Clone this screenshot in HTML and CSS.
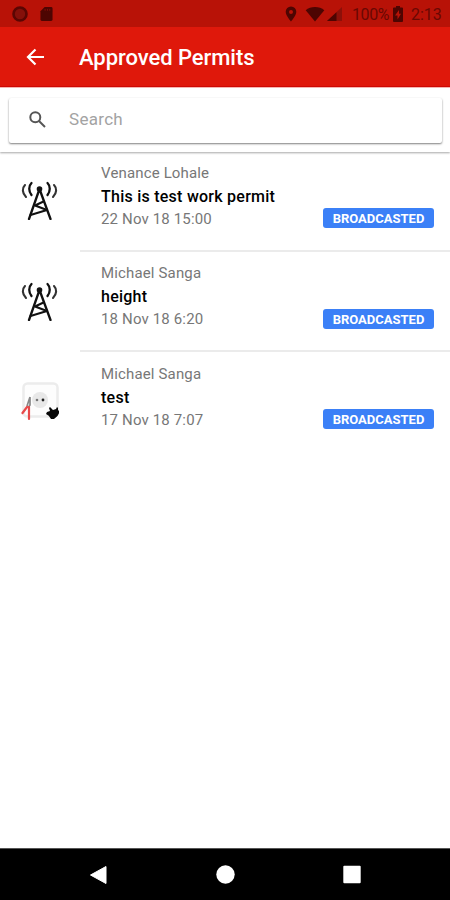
FILE: index.html
```html
<!DOCTYPE html>
<html lang="en">

<head>
    <meta charset="UTF-8">
    <meta name="viewport" content="width=device-width, initial-scale=1.0">
    <title>Approved Permits</title>
    <link rel="stylesheet" href="styles.css">
</head>

<body>
    <svg class="sprite">
        <symbol id="tower" viewBox="0 0 38 40">
            <g fill="none" stroke="#111" stroke-linecap="round">
                <path d="M18.500 9 8 39M18.500 9 29.500 39" stroke-width="2.300" />
                <path d="M14 25.500 22.500 21.500M14 25.500 26 30M9.500 35 26 30" stroke-width="2" />
                <path d="M10.500 3C7.500 6 7.500 11 10.500 15M26.500 3C29.500 6 29.500 11 26.500 15" stroke-width="2.300" />
                <path d="M4 5C1 8 1 13 5 17M33 5C36 8 36 13 32 17" stroke="#333" stroke-width="2.100" />
            </g>
            <circle cx="18.500" cy="9" r="2.800" fill="#111" />
        </symbol>
    </svg>

    <div class="screen">
        <div class="status">
            <svg class="ring" viewBox="0 0 16 16"><circle cx="8" cy="8" r="6.500" fill="#85100a" stroke="#5a0603" stroke-width="2.600" /></svg>
            <svg class="card" viewBox="0 0 14 16"><path d="M5 0.500h7q1.500 0 1.500 1.500v12q0 1.500-1.500 1.500H2Q.5 15.500.5 14V5z" fill="#4d0502" /><path d="M5.500 2.500v2M8 2.500v2M10.500 2.500v2" stroke="#85100a" /></svg>
            <div class="right">
                <svg class="pin" viewBox="0 0 12 16"><path fill-rule="evenodd" d="M6 .5a5.300 5.300 0 0 0-5.300 5.300C.7 9.800 6 15.500 6 15.500s5.300-5.700 5.300-9.700A5.300 5.300 0 0 0 6 .5zm0 3.400a2 2 0 1 1 0 4 2 2 0 0 1 0-4z" /></svg>
                <svg class="wifi" viewBox="0 0 20 16"><path d="M10 15.500.7 4.200C5.500-.2 14.500-.2 19.300 4.200z" /></svg>
                <svg class="signal" viewBox="0 0 15 15"><path d="M15 0v14H0z" fill="#8c1009" /><path d="M9.500 5.200V14H0z" /></svg>
                <span class="percent">100%</span>
                <svg class="power" viewBox="0 0 10 16"><path fill-rule="evenodd" d="M3 0h4v1.500h2q1 0 1 1V15q0 1-1 1H1q-1 0-1-1V2.500q0-1 1-1h2zM6 4 2 9.500h2.500V13.500L8 7.800H6z" /></svg>
                <span class="time">2:13</span>
            </div>
        </div>

        <div class="header">
            <svg class="back" viewBox="0 0 20 18"><path d="M18 9H2.500M9.500 1.500 2 9l7.500 7.500" /></svg>
            <h1>Approved Permits</h1>
        </div>

        <div class="search">
            <div class="searchBox">
                <svg viewBox="0 0 17 17"><circle cx="6.300" cy="6.300" r="5" /><path d="m10 10 6 6" /></svg>
                <span>Search</span>
            </div>
        </div>

        <div class="list">
            <div class="permit">
                <svg class="icon"><use href="#tower" /></svg>
                <div class="info">
                    <div class="name">Venance Lohale</div>
                    <div class="title">This is test work permit</div>
                    <div class="date">22 Nov 18 15:00</div>
                    <span class="badge">BROADCASTED</span>
                </div>
            </div>
            <div class="permit">
                <svg class="icon"><use href="#tower" /></svg>
                <div class="info">
                    <div class="name">Michael Sanga</div>
                    <div class="title">height</div>
                    <div class="date">18 Nov 18 6:20</div>
                    <span class="badge">BROADCASTED</span>
                </div>
            </div>
            <div class="permit">
                <svg class="icon" viewBox="0 0 38 40">
                    <rect x="2.500" y="2.500" width="34" height="33" rx="4" fill="#fdfdfd" stroke="#ececec" stroke-width="2.500" />
                    <circle cx="19" cy="19" r="8" fill="#e8e8e8" />
                    <circle cx="16" cy="19" r="1.300" fill="#777" />
                    <circle cx="22" cy="19" r="1.400" fill="#222" />
                    <path d="M9 16v8l-2 3M9 16 6 25" fill="none" stroke="#888" stroke-width="1.700" />
                    <path d="M6 26 1.500 32M8 26v12" fill="none" stroke="#e8494a" stroke-width="2.200" stroke-linecap="round" />
                    <path d="m26 31 3-1-1-3 1-1 3 3 3-1 1-2 1 1v2l1 1q1 4-5 8l-3 0q-2-4-5-5z" fill="#080808" />
                </svg>
                <div class="info">
                    <div class="name">Michael Sanga</div>
                    <div class="title">test</div>
                    <div class="date">17 Nov 18 7:07</div>
                    <span class="badge">BROADCASTED</span>
                </div>
            </div>
        </div>

        <div class="navbar">
            <svg viewBox="0 0 20 20"><path d="M17 1.500v17L1.500 10z" stroke="#fff" stroke-linejoin="round" /></svg>
            <svg viewBox="0 0 20 20"><circle cx="9.500" cy="9.500" r="9.200" /></svg>
            <svg viewBox="0 0 20 20"><rect x="1.300" y="0.800" width="17.400" height="17.400" rx="1" /></svg>
        </div>
    </div>
</body>

</html>
```
FILE: styles.css
```css
body {
    margin: 0;
    font-family: Roboto, sans-serif;
    background: #fff;
}

.sprite {
    display: none;
}

.screen {
    width: 450px;
    height: 900px;
    display: flex;
    flex-direction: column;
    overflow: hidden;
}

.status {
    height: 27px;
    box-sizing: border-box;
    padding: 1px 9px 0 12px;
    display: flex;
    align-items: center;
    background: #b81207;
    color: #690803;
    fill: #4d0502;
    font-size: 16px;
}

.ring {
    width: 16px;
    height: 16px;
}

.card {
    width: 13px;
    height: 16px;
    margin-left: 12px;
}

.right {
    margin-left: auto;
    display: flex;
    align-items: center;
}

.pin {
    width: 12px;
    height: 16px;
}

.wifi {
    width: 20px;
    height: 16px;
    margin-left: 8px;
}

.signal {
    width: 15px;
    height: 15px;
    margin-left: 2px;
}

.percent {
    margin-left: 10px;
    width: 37px;
    letter-spacing: -0.4px;
}

.power {
    width: 10px;
    height: 16px;
    margin-left: 4px;
}

.time {
    margin-left: 8px;
    width: 30px;
}

.header {
    height: 60px;
    padding-left: 26px;
    display: flex;
    align-items: center;
    background: #df180b;
    box-shadow: inset 0 -1px #d20a05;
}

.back {
    width: 20px;
    height: 18px;
    fill: none;
    stroke: #fff;
    stroke-width: 2.2;
}

.header h1 {
    margin: 0 0 0 33px;
    font-size: 22px;
    font-weight: 500;
    letter-spacing: -0.05px;
    color: #fff;
}

.search {
    height: 65px;
    box-sizing: border-box;
    padding: 10px 8px 9px 9px;
    border-top: 1px solid #f6b5b1;
    box-shadow: 0 1px 2px rgba(0, 0, 0, 0.35);
}

.searchBox {
    height: 45px;
    box-sizing: border-box;
    padding: 0 0 3px 20px;
    display: flex;
    align-items: center;
    border-radius: 2px;
    box-shadow: 0 1px 2px rgba(0, 0, 0, 0.5);
    font-size: 17px;
    letter-spacing: 0.3px;
    color: #a3a3a3;
}

.searchBox svg {
    width: 17px;
    height: 17px;
    margin-right: 23px;
    fill: none;
    stroke: #555;
    stroke-width: 2;
}

.list {
    flex: 1;
    padding-top: 10px;
}

.permit {
    height: 100.7px;
    display: flex;
}

.icon {
    width: 38px;
    height: 40px;
    margin: 18px 20px 0 21px;
}

.info {
    flex: 1;
    padding-left: 22px;
    display: grid;
    grid-template-columns: 1fr auto;
    grid-template-rows: 21px 26px 19px 1fr;
    align-items: center;
    position: relative;
}

.permit:not(:last-child) .info::after {
    content: "";
    position: absolute;
    left: 1px;
    right: 0;
    bottom: 11px;
    height: 2px;
    background: #ebebeb;
}

.name,
.title {
    grid-column: 1 / 3;
}

.name,
.date {
    font-size: 15px;
    letter-spacing: 0.15px;
    color: #777;
}

.title {
    font-size: 16px;
    font-weight: 500;
    letter-spacing: 0.25px;
    color: #000;
}

.badge {
    width: 111px;
    height: 20px;
    margin: 0 16px 1px 0;
    border-radius: 3px;
    background: #3b80f7;
    color: #fff;
    font-size: 13px;
    font-weight: 700;
    line-height: 21px;
    text-align: center;
}

.navbar {
    height: 52px;
    box-sizing: border-box;
    padding: 0 88px 0 89px;
    display: flex;
    align-items: center;
    justify-content: space-between;
    background: #000;
    border-top: 1px solid #555;
}

.navbar svg {
    width: 20px;
    height: 20px;
    fill: #fff;
}
```
